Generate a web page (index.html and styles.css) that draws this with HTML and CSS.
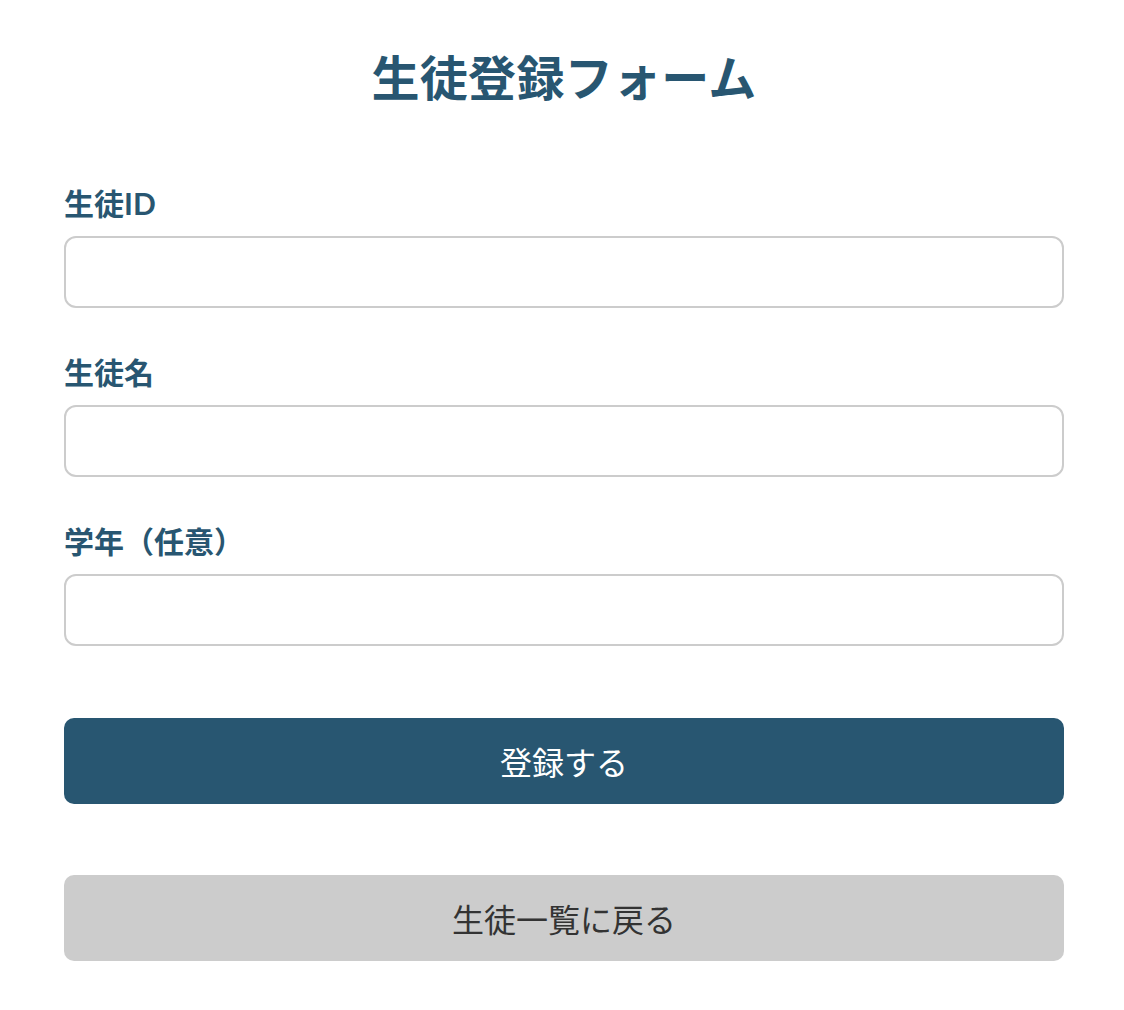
FILE: index.html
```html
<!DOCTYPE html>
<html lang="ja">
<head>
<meta charset="utf-8">
<title>生徒登録フォーム</title>
<link rel="stylesheet" href="styles.css">
</head>
<body>
<main class="page">
  <h1 class="title">生徒登録フォーム</h1>
  <form class="form">
    <div class="field">
      <label class="label" for="sid">生徒ID</label>
      <input class="input" id="sid" type="text">
    </div>
    <div class="field">
      <label class="label" for="sname">生徒名</label>
      <input class="input" id="sname" type="text">
    </div>
    <div class="field">
      <label class="label" for="grade">学年（任意）</label>
      <input class="input" id="grade" type="text">
    </div>
    <div class="actions">
      <button type="button" class="btn btn-primary">登録する</button>
      <button type="button" class="btn btn-secondary">生徒一覧に戻る</button>
    </div>
  </form>
</main>
</body>
</html>
```

FILE: styles.css
```css
html, body {
  margin: 0;
  padding: 0;
  background: #ffffff;
}

body {
  font-family: "Lato", "Noto Sans CJK JP", sans-serif;
  color: #333333;
}

.page {
  width: 1000px;
  margin: 0 0 0 64px;
  padding-top: 42px;
}

.title {
  margin: 0;
  font-size: 48px;
  line-height: 72px;
  font-weight: 700;
  text-align: center;
  color: #285671;
  letter-spacing: 0.3px;
}

.form {
  display: flex;
  flex-direction: column;
  margin-top: 68px;
}

.field {
  display: flex;
  flex-direction: column;
  gap: 12px;
  margin-bottom: 43px;
}

.label {
  font-size: 30px;
  line-height: 42px;
  font-weight: 700;
  color: #285671;
}

.input {
  box-sizing: border-box;
  width: 1000px;
  height: 72px;
  border: 2px solid #cccccc;
  border-radius: 12px;
  background: #ffffff;
  margin: 0;
  padding: 0 16px;
  font-size: 28px;
  outline: none;
}

.actions {
  display: flex;
  flex-direction: column;
  gap: 71px;
  margin-top: 29px;
}

.btn {
  box-sizing: border-box;
  width: 1000px;
  height: 86px;
  border: none;
  border-radius: 10px;
  font-family: "Lato", "Noto Sans CJK JP", sans-serif;
  font-size: 32px;
  font-weight: 400;
  padding: 0;
  margin: 0;
  cursor: pointer;
}

.btn-primary {
  background: #285671;
  color: #ffffff;
}

.btn-secondary {
  background: #cccccc;
  color: #333333;
}
```
